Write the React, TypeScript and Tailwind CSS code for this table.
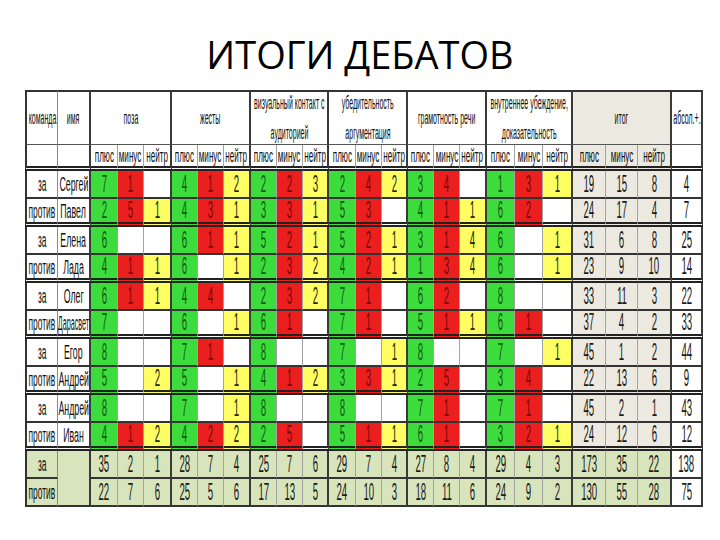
import React from "react";

type V = number | null;

const NAME = "scale-x-[0.44] text-[20px] leading-[20px]";
const NAME_TIGHT = "scale-x-[0.36] text-[20px] leading-[20px]";

const rows: { team: string; name: string; ns: string; v: V[]; tot: number[]; abs: number }[] = [
  { team: "за", name: "Сергей", ns: NAME, v: [7, 1, null, 4, 1, 2, 2, 2, 3, 2, 4, 2, 3, 4, null, 1, 3, 1], tot: [19, 15, 8], abs: 4 },
  { team: "против", name: "Павел", ns: NAME, v: [2, 5, 1, 4, 3, 1, 3, 3, 1, 5, 3, null, 4, 1, 1, 6, 2, null], tot: [24, 17, 4], abs: 7 },
  { team: "за", name: "Елена", ns: NAME, v: [6, null, null, 6, 1, 1, 5, 2, 1, 5, 2, 1, 3, 1, 4, 6, null, 1], tot: [31, 6, 8], abs: 25 },
  { team: "против", name: "Лада", ns: NAME, v: [4, 1, 1, 6, null, 1, 2, 3, 2, 4, 2, 1, 1, 3, 4, 6, null, 1], tot: [23, 9, 10], abs: 14 },
  { team: "за", name: "Олег", ns: NAME, v: [6, 1, 1, 4, 4, null, 2, 3, 2, 7, 1, null, 6, 2, null, 8, null, null], tot: [33, 11, 3], abs: 22 },
  { team: "против", name: "Дарасвет", ns: NAME_TIGHT, v: [7, null, null, 6, null, 1, 6, 1, null, 7, 1, null, 5, 1, 1, 6, 1, null], tot: [37, 4, 2], abs: 33 },
  { team: "за", name: "Егор", ns: NAME, v: [8, null, null, 7, 1, null, 8, null, null, 7, null, 1, 8, null, null, 7, null, 1], tot: [45, 1, 2], abs: 44 },
  { team: "против", name: "Андрей", ns: NAME, v: [5, null, 2, 5, null, 1, 4, 1, 2, 3, 3, 1, 2, 5, null, 3, 4, null], tot: [22, 13, 6], abs: 9 },
  { team: "за", name: "Андрей", ns: NAME, v: [8, null, null, 7, null, 1, 8, null, null, 8, null, null, 7, 1, null, 7, 1, null], tot: [45, 2, 1], abs: 43 },
  { team: "против", name: "Иван", ns: NAME, v: [4, 1, 2, 4, 2, 2, 2, 5, null, 5, 1, 1, 6, 1, null, 3, 2, 1], tot: [24, 12, 6], abs: 12 },
];

const summary = [
  { team: "за", v: [35, 2, 1, 28, 7, 4, 25, 7, 6, 29, 7, 4, 27, 8, 4, 29, 4, 3, 173, 35, 22], abs: 138 },
  { team: "против", v: [22, 7, 6, 25, 5, 6, 17, 13, 5, 24, 10, 3, 18, 11, 6, 24, 9, 2, 130, 55, 28], abs: 75 },
];

const colW = [
  "w-[33px]", "w-[33px]",
  "w-[27px]", "w-[26px]", "w-[28px]",
  "w-[26px]", "w-[26px]", "w-[27px]",
  "w-[26px]", "w-[26px]", "w-[26px]",
  "w-[27px]", "w-[26px]", "w-[26px]",
  "w-[26px]", "w-[26px]", "w-[27px]",
  "w-[28px]", "w-[28px]", "w-[30px]",
  "w-[33px]", "w-[32px]", "w-[34px]",
  "w-[31px]",
];

const THIN = "border-r border-r-[#a3a3a3]";
const THICK = "border-r-2 border-r-[#3a3a3a]";
const BB = "border-b-2 border-b-[#333333]";
const BD = "border-b-[5px] border-b-[#222222] [border-bottom-style:double]";
const LEFT = "border-l-2 border-l-[#333333]";
const TOP = "border-t-2 border-t-[#333333]";

function vr(c: number): string {
  if (c === 0) return "border-r border-r-[#8a8a8a]";
  if (c === 1) return THICK;
  if (c >= 2 && c <= 19) return (c - 2) % 3 === 2 ? THICK : THIN;
  if (c === 20 || c === 21) return THIN;
  return THICK;
}

const GREEN = "bg-[#3ddc3d] text-[#125812]";
const RED = "bg-[#ec1f1f] text-[#730707]";
const YELLOW = "bg-[#ffff63] text-[#24240e]";
const colorFor = [GREEN, RED, YELLOW];

function Sq({ children, s }: { children: React.ReactNode; s: string }) {
  return (
    <div className="flex justify-center">
      <span className={"inline-block whitespace-nowrap " + s}>{children}</span>
    </div>
  );
}

const HS = "scale-x-[0.39] text-[18px] leading-[19px]";
const H2S = "scale-x-[0.45] text-[18px] leading-[20px]";
const NS = "scale-x-[0.42] text-[23px] leading-[23px]";
const TS = "scale-x-[0.42] text-[20px] leading-[20px]";

function HeadGroup({ lines, extra, right }: { lines: string[]; extra?: string; right: string }) {
  return (
    <td colSpan={3} className={"p-0 align-middle text-[#111] border-b border-b-[#555] " + TOP + " " + right + (extra ? " " + extra : "")}>
      <div className="flex flex-col items-center gap-[11px]">
        {lines.map((l, i) => (
          <Sq key={i} s={HS}>{l}</Sq>
        ))}
      </div>
    </td>
  );
}

export default function App() {
  const subLabels = ["плюс", "минус", "нейтр"];
  return (
    <div className="w-[720px] h-[540px] bg-white overflow-hidden font-['Liberation_Sans',Arial,sans-serif]">
      <h1 className="text-center text-[38px] leading-none pt-[35px] font-['Open_Sans',sans-serif] font-normal text-black">
        ИТОГИ ДЕБАТОВ
      </h1>
      <div className="mt-[17px] ml-[25px]">
        <table className="table-fixed border-separate border-spacing-0 w-[678px]">
          <colgroup>
            {colW.map((w, i) => (
              <col key={i} className={w} />
            ))}
          </colgroup>
          <thead>
            <tr>
              <td className={"h-[55px] p-0 align-middle text-[#111] border-b border-b-[#555] " + TOP + " " + LEFT + " " + vr(0)}>
                <Sq s={HS}>команда</Sq>
              </td>
              <td className={"p-0 align-middle text-[#111] border-b border-b-[#555] " + TOP + " " + vr(1)}>
                <Sq s={HS}>имя</Sq>
              </td>
              <HeadGroup lines={["поза"]} right={THICK} />
              <HeadGroup lines={["жесты"]} right={THICK} />
              <HeadGroup lines={["визуальный контакт с", "аудиторией"]} right={THICK} />
              <HeadGroup lines={["убедительность", "аргументация"]} right={THICK} />
              <HeadGroup lines={["грамотность речи"]} right={THICK} />
              <HeadGroup lines={["внутреннее убеждение,", "доказательность"]} right={THICK} />
              <HeadGroup lines={["итог"]} right={THICK} extra="bg-[#ece9e0]" />
              <td className={"p-0 align-middle text-[#111] border-b border-b-[#555] " + TOP + " " + vr(23)}>
                <Sq s={HS}>абсол.+.</Sq>
              </td>
            </tr>
            <tr>
              <td className={"h-[26px] p-0 " + BD + " " + LEFT + " " + vr(0)}></td>
              <td className={"p-0 " + BD + " " + vr(1)}></td>
              {Array.from({ length: 21 }).map((_, i) => (
                <td
                  key={i}
                  className={"p-0 align-middle text-[#111] " + BD + " " + vr(i + 2) + (i >= 18 ? " bg-[#ece9e0]" : "")}
                >
                  <Sq s={H2S}>{subLabels[i % 3]}</Sq>
                </td>
              ))}
              <td className={"p-0 " + BD + " " + vr(23)}></td>
            </tr>
          </thead>
          <tbody>
            {rows.map((r, ri) => {
              const bb = ri % 2 === 1 ? BD : BB;
              return (
                <tr key={ri}>
                  <td className={"h-[28px] p-0 align-middle text-[#111] " + bb + " " + LEFT + " " + vr(0)}>
                    <Sq s={TS}>{r.team}</Sq>
                  </td>
                  <td className={"p-0 align-middle text-[#111] " + bb + " " + vr(1)}>
                    <Sq s={r.ns}>{r.name}</Sq>
                  </td>
                  {r.v.map((v, ci) => (
                    <td
                      key={ci}
                      className={
                        "p-0 align-middle " + bb + " " + vr(ci + 2) + " " + (v === null ? "bg-white" : colorFor[ci % 3])
                      }
                    >
                      {v !== null && <Sq s={NS}>{v}</Sq>}
                    </td>
                  ))}
                  {r.tot.map((t, ti) => (
                    <td key={"t" + ti} className={"p-0 align-middle bg-[#ece9e0] text-[#1a1a1a] " + bb + " " + vr(20 + ti)}>
                      <Sq s={NS}>{t}</Sq>
                    </td>
                  ))}
                  <td className={"p-0 align-middle bg-white text-[#1a1a1a] " + bb + " " + vr(23)}>
                    <Sq s={NS}>{r.abs}</Sq>
                  </td>
                </tr>
              );
            })}
            {summary.map((s, si) => (
              <tr key={"s" + si}>
                <td className={"h-[28px] p-0 align-middle bg-[#d8e4bc] text-[#111] " + BB + " " + LEFT + " " + vr(0)}>
                  <Sq s={TS}>{s.team}</Sq>
                </td>
                {si === 0 && (
                  <td rowSpan={2} className={"p-0 bg-[#d8e4bc] " + BB + " " + vr(1)}></td>
                )}
                {s.v.map((v, ci) => (
                  <td key={ci} className={"p-0 align-middle bg-[#d8e4bc] text-[#1a1a1a] " + BB + " " + vr(ci + 2)}>
                    <Sq s={NS}>{v}</Sq>
                  </td>
                ))}
                <td className={"p-0 align-middle bg-white text-[#1a1a1a] " + BB + " " + vr(23)}>
                  <Sq s={NS}>{s.abs}</Sq>
                </td>
              </tr>
            ))}
          </tbody>
        </table>
      </div>
    </div>
  );
}
